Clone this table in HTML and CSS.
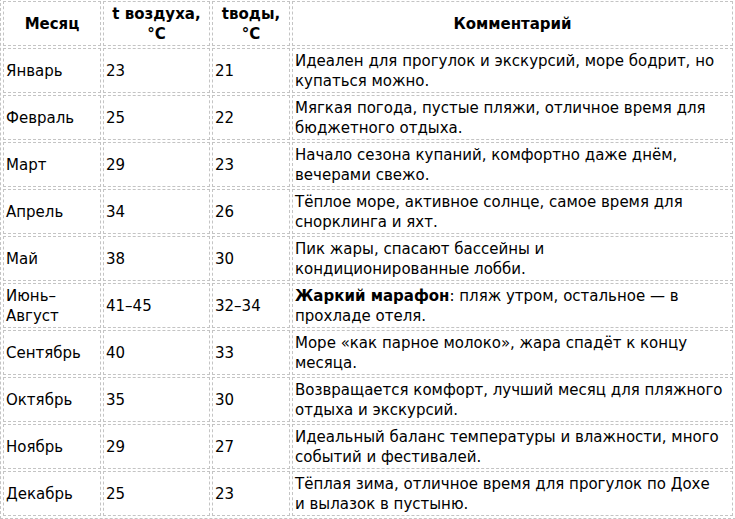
FILE: index.html
```html
<!DOCTYPE html>
<html lang="ru">
<head>
<meta charset="utf-8">
<title>Погода</title>
<link rel="stylesheet" href="styles.css">
</head>
<body>
<table class="climate">
  <colgroup>
    <col class="c-month">
    <col class="c-air">
    <col class="c-water">
    <col class="c-note">
  </colgroup>
  <thead>
    <tr>
      <th>Месяц</th>
      <th>t воздуха, °C</th>
      <th>tводы, °C</th>
      <th>Комментарий</th>
    </tr>
  </thead>
  <tbody>
    <tr><td>Январь</td><td>23</td><td>21</td><td>Идеален для прогулок и экскурсий, море бодрит, но<br>купаться можно.</td></tr>
    <tr><td>Февраль</td><td>25</td><td>22</td><td>Мягкая погода, пустые пляжи, отличное время для<br>бюджетного отдыха.</td></tr>
    <tr><td>Март</td><td>29</td><td>23</td><td>Начало сезона купаний, комфортно даже днём,<br>вечерами свежо.</td></tr>
    <tr><td>Апрель</td><td>34</td><td>26</td><td>Тёплое море, активное солнце, самое время для<br>снорклинга и яхт.</td></tr>
    <tr><td>Май</td><td>38</td><td>30</td><td>Пик жары, спасают бассейны и<br>кондиционированные лобби.</td></tr>
    <tr><td>Июнь–Август</td><td>41–45</td><td>32–34</td><td><b>Жаркий марафон</b>: пляж утром, остальное — в<br>прохладе отеля.</td></tr>
    <tr><td>Сентябрь</td><td>40</td><td>33</td><td>Море «как парное молоко», жара спадёт к концу<br>месяца.</td></tr>
    <tr><td>Октябрь</td><td>35</td><td>30</td><td>Возвращается комфорт, лучший месяц для пляжного<br>отдыха и экскурсий.</td></tr>
    <tr><td>Ноябрь</td><td>29</td><td>27</td><td>Идеальный баланс температуры и влажности, много<br>событий и фестивалей.</td></tr>
    <tr><td>Декабрь</td><td>25</td><td>23</td><td>Тёплая зима, отличное время для прогулок по Дохе<br>и вылазок в пустыню.</td></tr>
  </tbody>
</table>
</body>
</html>
```
FILE: styles.css
```css
html {
  overflow: hidden;
  background: #fff;
}
body {
  margin: 0;
  font-family: "DejaVu Sans", Verdana, sans-serif;
  font-size: 15px;
  line-height: 19.5px;
  color: #000;
}
.climate {
  border: 1px dashed #c4c4c4;
  border-collapse: separate;
  border-spacing: 2px;
  table-layout: fixed;
  width: 736px;
  margin-top: -2px;
}
.c-month { width: 98px; }
.c-air { width: 107px; }
.c-water { width: 78px; }
.c-note { width: 441px; }
.climate th,
.climate td {
  border: 1px dashed #c4c4c4;
  padding: 3px 2px 1px 2px;
  vertical-align: middle;
  height: 39px;
}
.climate th {
  font-weight: bold;
  text-align: center;
}
.climate td {
  text-align: left;
}
```
